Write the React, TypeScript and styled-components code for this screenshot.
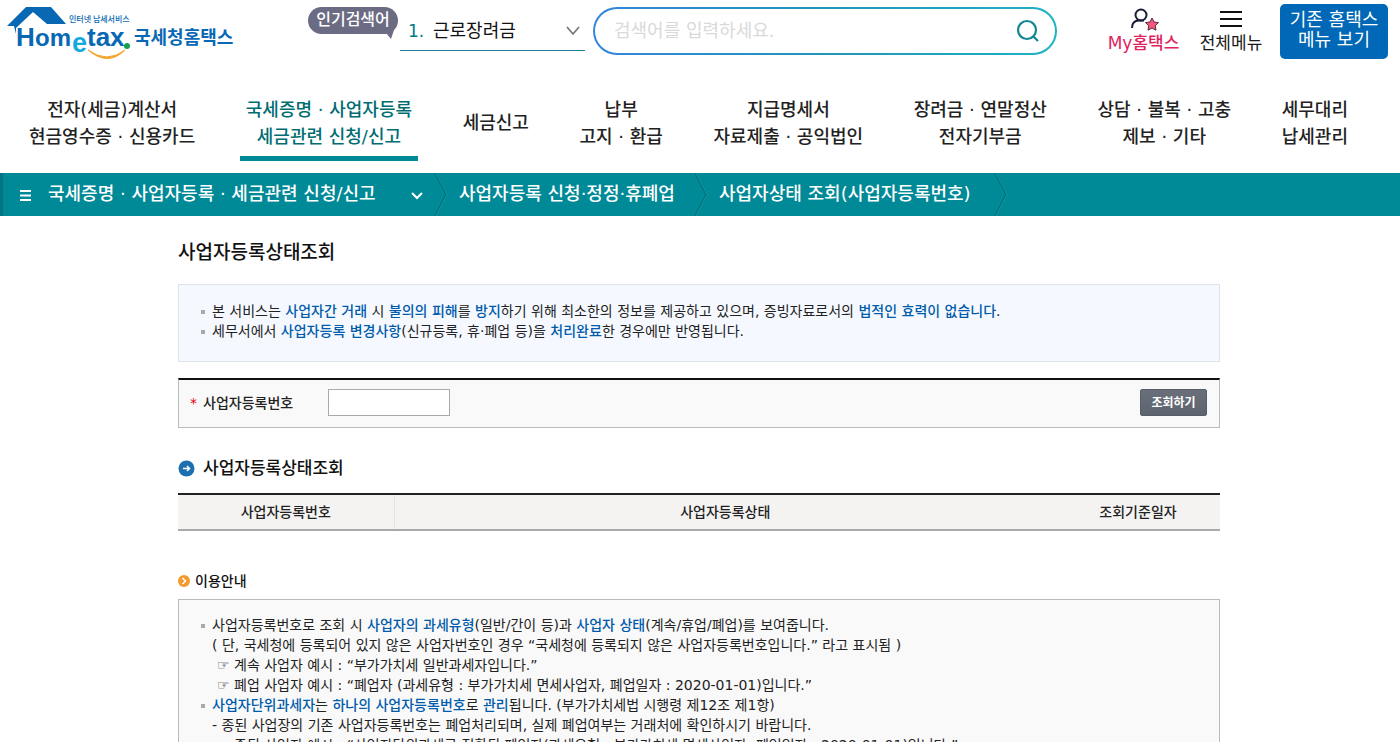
import React from "react";
import styled, { createGlobalStyle } from "styled-components";

const Global = createGlobalStyle`
  * { box-sizing: border-box; }
  body { margin: 0; background: #fff; color: #222; font-family: "DejaVu Sans", "Noto Sans CJK KR", sans-serif; font-size: 14px; line-height: 20px; }
  a { color: inherit; text-decoration: none; }
  h1, h2, h3, ul, p { margin: 0; padding: 0; }
  ul { list-style: none; }
  button, input, select { font-family: inherit; }
`;

const Header = styled.header`
  display: flex;
  align-items: flex-start;
  height: 86px;
  padding: 0 12px 0 6px;
`;
const LogoLink = styled.a`
  display: block;
  width: 232px;
  margin-top: 4px;
  svg { display: block; }
`;
const Popular = styled.div`
  display: flex;
  margin-left: 70px;
`;
const Bubble = styled.label`
  position: relative;
  width: 90px;
  height: 27px;
  margin-top: 7px;
  border-radius: 14px;
  background: #6b6c84;
  color: #fff;
  font-size: 16px;
  font-weight: 500;
  line-height: 25px;
  text-align: center;
  &::after {
    content: "";
    position: absolute;
    right: 3px;
    bottom: -5px;
    border: solid transparent;
    border-width: 0 4px 12px 10px;
    border-top: 12px solid #6b6c84;
    border-bottom: 0;
  }
`;
const Ranking = styled.div`
  display: flex;
  align-items: center;
  width: 185px;
  height: 41px;
  margin: 10px 8px 0 2px;
  padding: 2px 4px 0 8px;
  border-bottom: 1px solid #1b8599;
  svg { flex: none; }
`;
const Rank = styled.span`
  width: 25px;
  color: #007a80;
  font-size: 17px;
  font-weight: 500;
`;
const RankSelect = styled.select`
  flex: 1;
  min-width: 0;
  padding: 0;
  border: 0;
  background: none;
  appearance: none;
  color: #111;
  font-size: 18px;
  line-height: 24px;
`;
const Search = styled.form`
  display: flex;
  flex: 1;
  max-width: 800px;
  height: 48px;
  margin-top: 7px;
  padding: 2px;
  border-radius: 24px;
  background: linear-gradient(90deg, #3485dc, #2095b8 50%, #1db3c4);
`;
const SearchInner = styled.div`
  display: flex;
  flex: 1;
  align-items: center;
  min-width: 0;
  padding: 0 14px 0 19px;
  border-radius: 22px;
  background: #fff;
`;
const SearchInput = styled.input`
  flex: 1;
  min-width: 0;
  padding: 0 0 2px;
  border: 0;
  outline: 0;
  background: none;
  font-size: 18px;
  &::placeholder { color: #d9d9d9; opacity: 1; }
`;
const IconButton = styled.button`
  display: flex;
  padding: 0;
  border: 0;
  background: none;
`;
const Shortcut = styled.a<{ $accent?: boolean }>`
  display: flex;
  flex-direction: column;
  align-items: center;
  min-width: ${(p) => (p.$accent ? 75 : 64)}px;
  margin: 7px 0 0 ${(p) => (p.$accent ? 49 : 18)}px;
  color: ${(p) => (p.$accent ? "#e0245e" : "#1a1a1a")};
  font-size: 17px;
  font-weight: ${(p) => (p.$accent ? 500 : 400)};
  line-height: 22px;
  white-space: nowrap;
`;
const OldMenu = styled.button`
  width: 108px;
  height: 55px;
  margin: 4px 0 0 17px;
  padding: 0 0 4px;
  border: 0;
  border-radius: 5px;
  background: #0068b7;
  color: #fff;
  font-size: 18px;
  line-height: 20px;
  white-space: nowrap;
`;

const Nav = styled.nav`
  display: flex;
  height: 87px;
  padding: 0 46px 0 23px;
  justify-content: space-between;
`;
const NavItem = styled.a<{ $active?: boolean }>`
  display: flex;
  align-items: center;
  height: 75px;
  padding: 3px 6px 0;
  border-bottom: 5px solid ${(p) => (p.$active ? "#008996" : "transparent")};
  color: ${(p) => (p.$active ? "#006d73" : "#222")};
  font-size: 18px;
  font-weight: 500;
  line-height: 27px;
  text-align: center;
  white-space: nowrap;
`;

const Crumbs = styled.nav`
  display: flex;
  height: 43px;
  border-left: 3px solid #007483;
  background: #008996;
  color: #fff;
  font-size: 18px;
  font-weight: 500;
  white-space: nowrap;
`;
const Crumb = styled.a<{ $width: number }>`
  display: flex;
  align-items: center;
  width: ${(p) => p.$width}px;
  padding: 0 0 2px 11px;
`;
const CrumbFirst = styled(Crumb)`
  gap: 16px;
  padding: 0 10px 2px 16px;
  span { flex: 1; }
  svg { margin-top: 2px; }
`;

const Main = styled.main`
  padding: 24px 180px 40px 178px;
`;
const Title = styled.h1`
  font-size: 19px;
  font-weight: 500;
  line-height: 24px;
  color: #111;
`;
const Notice = styled.section`
  min-height: 78px;
  margin-top: 20px;
  padding: 16px 20px;
  border: 1px solid #dde3e9;
  background: #f5f9ff;
`;
const Item = styled.li<{ $bullet?: boolean }>`
  position: relative;
  padding-left: 13px;
  line-height: 20px;
  &::before {
    content: "";
    display: ${(p) => (p.$bullet ? "block" : "none")};
    position: absolute;
    left: 2px;
    top: 9px;
    width: 4px;
    height: 4px;
    background: #a5a8ad;
  }
`;
const Example = styled(Item)`
  padding-left: 18px;
`;
const Strong = styled.strong`
  color: #005bab;
  font-weight: 500;
`;
const Lookup = styled.form`
  display: flex;
  align-items: center;
  height: 50px;
  margin-top: 16px;
  padding: 0 12px 2px 11px;
  border: 1px solid #bbb;
  border-top: 2px solid #111;
  background: #f9f9f9;
`;
const FieldLabel = styled.label`
  display: flex;
  gap: 6px;
  width: 138px;
  font-size: 14px;
  font-weight: 500;
  i { color: #e60012; font-style: normal; }
`;
const Field = styled.input`
  width: 122px;
  height: 27px;
  border: 1px solid #aaa;
  background: #fff;
`;
const Submit = styled.button`
  width: 67px;
  height: 27px;
  margin-left: auto;
  padding: 0 0 3px;
  border: 1px solid #575e69;
  border-radius: 2px;
  background: linear-gradient(#69707a, #5d646f);
  color: #fff;
  font-size: 12px;
  font-weight: 700;
`;
const SectionTitle = styled.h2`
  display: flex;
  align-items: center;
  gap: 8px;
  margin-top: 28px;
  font-size: 17px;
  font-weight: 500;
  line-height: 24px;
  color: #111;
`;
const GuideTitle = styled.h3`
  display: flex;
  align-items: center;
  gap: 5px;
  margin-top: 40px;
  font-size: 14px;
  font-weight: 500;
  line-height: 20px;
  color: #111;
`;
const Table = styled.table`
  width: 100%;
  margin-top: 13px;
  border-collapse: collapse;
  table-layout: fixed;
  border-top: 2px solid #222;
  border-bottom: 2px solid #aaa;
`;
const Th = styled.th<{ $width?: string }>`
  width: ${(p) => p.$width ?? "auto"};
  height: 36px;
  padding: 0;
  background: #f4f3f2;
  font-size: 14px;
  font-weight: 500;
  &:first-child { border-right: 1px solid #e4e3e1; }
`;
const Guide = styled.section`
  margin-top: 8px;
  padding: 15px 20px 24px;
  border: 1px solid #bbb;
  background: #f9f9f9;
`;

const Logo = () => (
  <svg width="232" height="58" viewBox="0 0 232 58" role="img" aria-label="Hometax 국세청홈택스">
    <path d="M1 22 20 3h25l15 17H41L27 8 10 24v6L8 22Z" fill="#0868b4" />
    <g fontFamily="Liberation Sans, sans-serif" fontWeight="700" fill="#0868b4">
      <text x="10" y="42" fontSize="26">H</text>
      <text x="29" y="42" fontSize="24">om</text>
      <text x="66" y="48" fontSize="27" fill="#16a9df">e</text>
      <text x="81" y="42" fontSize="26">tax</text>
    </g>
    <circle cx="121" cy="42" r="3" fill="#14a052" />
    <path d="M82 46q19 14 37 0-17 17-37 0Z" fill="#f5a327" stroke="#f5a327" />
    <g fontFamily="Noto Sans CJK KR, sans-serif" fill="#0868b4">
      <text x="63" y="18" fontSize="8" fontWeight="500">인터넷 납세서비스</text>
      <text x="128" y="40" fontSize="18" fontWeight="700">국세청홈택스</text>
    </g>
  </svg>
);

const Separator = () => (
  <svg width="14" height="43" viewBox="0 0 14 43" fill="none" aria-hidden="true">
    <path d="M1 0 12 21.5 1 43" stroke="#00707c" strokeWidth="1.3" />
    <path d="M2 0 13 21.5 2 43" stroke="#2a9ca7" strokeWidth=".6" />
  </svg>
);

const menus: string[][] = [
  ["전자(세금)계산서", "현금영수증 · 신용카드"],
  ["국세증명 · 사업자등록", "세금관련 신청/신고"],
  ["세금신고"],
  ["납부", "고지 · 환급"],
  ["지급명세서", "자료제출 · 공익법인"],
  ["장려금 · 연말정산", "전자기부금"],
  ["상담 · 불복 · 고충", "제보 · 기타"],
  ["세무대리", "납세관리"],
];

export default function App() {
  return (
    <>
      <Global />
      <Header>
        <LogoLink href="#"><Logo /></LogoLink>
        <Popular>
          <Bubble htmlFor="popular">인기검색어</Bubble>
          <Ranking>
            <Rank>1.</Rank>
            <RankSelect id="popular"><option>근로장려금</option></RankSelect>
            <svg width="16" height="10" viewBox="0 0 16 10" fill="none" stroke="#777" strokeWidth="1.7"><path d="m2 1 6 7 6-7" /></svg>
          </Ranking>
        </Popular>
        <Search>
          <SearchInner>
            <SearchInput aria-label="검색어" placeholder="검색어를 입력하세요." />
            <IconButton type="button" aria-label="검색">
              <svg width="26" height="26" viewBox="0 0 26 26" fill="none" stroke="#138894" strokeWidth="2.2"><circle cx="12" cy="12" r="9" /><path d="m18 18 5 5" /></svg>
            </IconButton>
          </SearchInner>
        </Search>
        <Shortcut href="#" $accent>
          <svg width="30" height="25" viewBox="0 0 30 25" fill="none">
            <circle cx="12" cy="8" r="5.5" stroke="#1c1d3a" strokeWidth="2" />
            <path d="M3 21c0-5 3-7.500 7-7.500h5" stroke="#1c1d3a" strokeWidth="2" />
            <path d="m23 11 2 4 4.500.6-3.300 3.200.8 4.400-4-2.100-4 2.100.8-4.400-3.300-3.200 4.500-.6Z" fill="#f6577e" stroke="#5b2940" strokeWidth="1" strokeLinejoin="round" />
          </svg>
          My홈택스
        </Shortcut>
        <Shortcut href="#">
          <svg width="22" height="25" viewBox="0 0 22 25" stroke="#111" strokeWidth="2"><path d="M0 5h22M0 12h22M0 19h22" /></svg>
          전체메뉴
        </Shortcut>
        <OldMenu type="button">기존 홈택스<br />메뉴 보기</OldMenu>
      </Header>
      <Nav>
        {menus.map((lines, i) => (
          <NavItem href="#" key={lines[0]} $active={i === 1}>
            <span>{lines[0]}{lines[1] && <><br />{lines[1]}</>}</span>
          </NavItem>
        ))}
      </Nav>
      <Crumbs>
        <CrumbFirst href="#" $width={431}>
          <svg width="13" height="12" viewBox="0 0 13 12" stroke="#fff" strokeWidth="2"><path d="M1 2h11M1 6.500h11M1 11h11" /></svg>
          <span>국세증명 · 사업자등록 · 세금관련 신청/신고</span>
          <svg width="14" height="10" viewBox="0 0 14 10" fill="none" stroke="#fff" strokeWidth="2"><path d="m2 3 5 5 5-5" /></svg>
        </CrumbFirst>
        <Separator />
        <Crumb href="#" $width={246}>사업자등록 신청·정정·휴폐업</Crumb>
        <Separator />
        <Crumb href="#" $width={286}>사업자상태 조회(사업자등록번호)</Crumb>
        <Separator />
      </Crumbs>
      <Main>
        <Title>사업자등록상태조회</Title>
        <Notice>
          <ul>
            <Item $bullet>본 서비스는 <Strong>사업자간 거래</Strong> 시 <Strong>불의의 피해</Strong>를 <Strong>방지</Strong>하기 위해 최소한의 정보를 제공하고 있으며, 증빙자료로서의 <Strong>법적인 효력이 없습니다</Strong>.</Item>
            <Item $bullet>세무서에서 <Strong>사업자등록 변경사항</Strong>(신규등록, 휴·폐업 등)을 <Strong>처리완료</Strong>한 경우에만 반영됩니다.</Item>
          </ul>
        </Notice>
        <Lookup>
          <FieldLabel htmlFor="number"><i>*</i>사업자등록번호</FieldLabel>
          <Field id="number" />
          <Submit type="button">조회하기</Submit>
        </Lookup>
        <SectionTitle>
          <svg width="17" height="17" viewBox="0 0 17 17"><circle cx="8.500" cy="8.500" r="8" fill="#1d6fb0" /><path d="M5 8.500h6M9 6l2.500 2.500L9 11" fill="none" stroke="#fff" strokeWidth="1.500" /></svg>
          사업자등록상태조회
        </SectionTitle>
        <Table>
          <thead>
            <tr>
              <Th $width="216px">사업자등록번호</Th>
              <Th>사업자등록상태</Th>
              <Th $width="164px">조회기준일자</Th>
            </tr>
          </thead>
        </Table>
        <GuideTitle>
          <svg width="12" height="12" viewBox="0 0 12 12"><circle cx="6" cy="6" r="6" fill="#f39a2d" /><path d="m4.500 3 3 3-3 3" fill="none" stroke="#fff" strokeWidth="1.500" /></svg>
          이용안내
        </GuideTitle>
        <Guide>
          <ul>
            <Item $bullet>사업자등록번호로 조회 시 <Strong>사업자의 과세유형</Strong>(일반/간이 등)과 <Strong>사업자 상태</Strong>(계속/휴업/폐업)를 보여줍니다.</Item>
            <Item>( 단, 국세청에 등록되어 있지 않은 사업자번호인 경우 “국세청에 등록되지 않은 사업자등록번호입니다.” 라고 표시됨 )</Item>
            <Example>☞ 계속 사업자 예시 : “부가가치세 일반과세자입니다.”</Example>
            <Example>☞ 폐업 사업자 예시 : “폐업자 (과세유형 : 부가가치세 면세사업자, 폐업일자 : 2020-01-01)입니다.”</Example>
            <Item $bullet><Strong>사업자단위과세자</Strong>는 <Strong>하나의 사업자등록번호</Strong>로 <Strong>관리</Strong>됩니다. (부가가치세법 시행령 제12조 제1항)</Item>
            <Item>- 종된 사업장의 기존 사업자등록번호는 폐업처리되며, 실제 폐업여부는 거래처에 확인하시기 바랍니다.</Item>
            <Example>☞ 종된 사업자 예시 : “사업자단위과세로 전환된 폐업자(과세유형 : 부가가치세 면세사업자, 폐업일자 : 2020-01-01)입니다.”</Example>
          </ul>
        </Guide>
      </Main>
    </>
  );
}
